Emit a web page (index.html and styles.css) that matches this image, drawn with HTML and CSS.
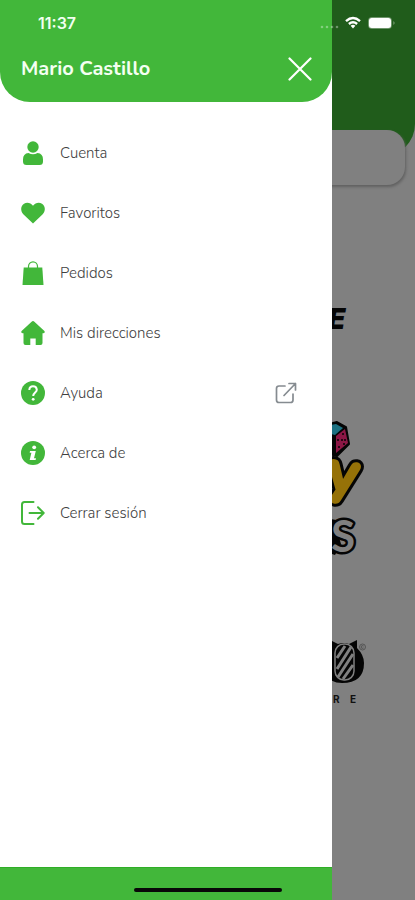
FILE: index.html
```html
<!DOCTYPE html>
<html lang="es">
<head>
<meta charset="utf-8">
<meta name="viewport" content="width=device-width, initial-scale=1">
<title>Menú</title>
<link rel="stylesheet" href="styles.css">
</head>
<body>
<div class="screen">
  <div class="status">
    <time class="clock">11:37</time>
    <svg class="status-icons" width="76" height="16" viewBox="0 0 76 16" aria-hidden="true">
      <g fill="#fff" opacity=".35"><circle cx="2" cy="12" r="1.3"/><circle cx="7" cy="12" r="1.3"/><circle cx="12" cy="12" r="1.3"/><circle cx="17" cy="12" r="1.3"/></g>
      <g fill="none" stroke="#fff" stroke-width="2.4"><path d="M26 6.2q7-6.2 14 0"/><path d="M28.9 9q4.100-3.600 8.200 0"/></g>
      <path d="M30.600 10.700q2.400-1.800 4.800 0L33 13.400z" fill="#fff"/>
      <rect x="48.500" y="2.500" width="23" height="11" rx="3" fill="none" stroke="#fff" opacity=".35"/>
      <rect x="49" y="3" width="22" height="10" rx="2.500" fill="#fff"/>
      <path d="M73.500 6q2 2 0 4z" fill="#fff" opacity=".5"/>
    </svg>
  </div>

  <main class="store">
    <div class="store-head"></div>
    <div class="search"></div>
    <div class="brands">
      <svg class="brand" width="83" height="40" viewBox="332 300 83 40">
        <text x="328" y="329" class="brand-e">E</text>
      </svg>
      <svg class="brand" width="83" height="150" viewBox="332 410 83 150">
        <path d="M326 423l11-3 9 5 3 17-12 12-11-3z" fill="#050505" stroke="#050505" stroke-width="2" stroke-linejoin="round"/>
        <path d="M326 424l10-2 7 4-8 7-9-2z" fill="#1d7182"/>
        <path d="M336 434l9-7 3 14-12 10z" fill="#8c1745"/>
        <g fill="#050505"><circle cx="343" cy="432" r="1"/><circle cx="338" cy="438" r="1"/><circle cx="342" cy="438" r="1"/><circle cx="345" cy="438" r="1"/><circle cx="339" cy="445" r="1"/><circle cx="344" cy="442" r="1"/></g>
        <text x="325" y="491" class="brand-y" transform="rotate(8 345 480)">y</text>
        <path d="M326 516l10 2 2 14 3 10-6 11-9-3z" fill="#050505"/>
        <text x="331" y="550" class="brand-s">S</text>
      </svg>
      <svg class="brand" width="83" height="75" viewBox="332 635 83 75">
        <path d="M327 646l5-4 6 3q6-2 11 0l8-4v8q7 7 7 15 0 20-22 20-17 0-17-18z" fill="#050505"/>
        <rect x="335" y="645" width="19" height="36" rx="9" fill="#050505" stroke="#808080" stroke-width="1.500"/>
        <g stroke="#808080" stroke-width="3"><path d="M337 659l8-12M337 670l14-22M338 678l15-23M343 680l10-14"/></g>
        <circle cx="362.500" cy="648" r="3" fill="none" stroke="#444" stroke-width=".7"/>
        <path d="M363.700 647q-2.500-1.300-2.500 1t2.500 1" fill="none" stroke="#444" stroke-width=".7"/>
        <text x="333" y="704" class="brand-small">R</text><text x="350" y="704" class="brand-small">E</text>
      </svg>
    </div>
  </main>

  <aside class="drawer">
    <header class="drawer-head">
      <h1>Mario Castillo</h1>
      <button class="close" type="button" aria-label="Cerrar">
        <svg width="24" height="24" viewBox="0 0 24 24" fill="none" stroke="#fff" stroke-width="2.200" stroke-linecap="round"><path d="M1.500 1.500l21 21M22.500 1.500l-21 21"/></svg>
      </button>
    </header>
    <nav class="menu">
      <a href="#cuenta"><svg class="icon" viewBox="0 0 24 24"><circle cx="12" cy="6" r="5.700"/><path d="M2 18.500Q2 12.500 7.500 12q4.500 2.500 9 0 5.500.5 5.500 6.500v2q0 3.500-3.500 3.500h-13Q2 24 2 20.500z"/></svg><span>Cuenta</span></a>
      <a href="#favoritos"><svg class="icon" viewBox="0 0 24 24"><path d="M12 22.500L2.300 13.200C-1 9.500-.2 4.800 3 2.700c3-2 6.700-1 9 2 2.300-3 6-4 9-2 3.200 2.100 4 6.800.7 10.500z"/></svg><span>Favoritos</span></a>
      <a href="#pedidos"><svg class="icon" viewBox="0 0 24 24"><path d="M2.700 6.500h18.600L22.500 24h-21z"/><path d="M7.500 8V5.500a4.500 4.700 0 0 1 9 0V8" fill="none" stroke="#42b73a" stroke-width="1.200"/></svg><span>Pedidos</span></a>
      <a href="#direcciones"><svg class="icon" viewBox="0 0 24 24"><path d="M10.600.7q1.400-1.200 2.800 0l10 9.200q1.200 2-1 2.300h-.9V22q0 2-2 2h-4.800v-6.500h-5.400V24H4.500q-2 0-2-2v-9.800h-.9q-2.200-.3-1-2.300z"/></svg><span>Mis direcciones</span></a>
      <a href="#ayuda"><svg class="icon" viewBox="0 0 24 24"><circle cx="12" cy="12" r="12"/><path d="M8.300 9Q8.500 5.300 12 5.300T15.800 8.700c0 2.700-3.600 3-3.600 6.300" fill="none" stroke="#fff" stroke-width="2"/><circle cx="12.200" cy="18.300" r="1.400" fill="#fff"/></svg><span>Ayuda</span>
        <svg class="external" width="22" height="22" viewBox="0 0 22 22" fill="none" stroke="#858b90" stroke-width="1.700" stroke-linecap="round" stroke-linejoin="round"><path d="M10 4H4Q1.500 4 1.500 6.500v11.500Q1.500 20.500 4 20.500h11.500Q18 20.500 18 18v-6M9 13.500L20.500 1.500M14 1.500h6.500V8"/></svg></a>
      <a href="#acerca"><svg class="icon" viewBox="0 0 24 24"><circle cx="12" cy="12" r="12"/><circle cx="13.200" cy="6.300" r="1.900" fill="#fff"/><path d="M9 10h5.800L13 17.300h2l-.4 1.700H8.700l1.700-7.300H8.700z" fill="#fff"/></svg><span>Acerca de</span></a>
      <a href="#salir"><svg class="icon" viewBox="0 0 24 24"><path d="M12.500 1H3.500Q1 1 1 3.500v17Q1 23 3.500 23h9M8.500 12h14M17 6.300L22.700 12 17 17.700" fill="none" stroke="#42b73a" stroke-width="2" stroke-linecap="round" stroke-linejoin="round"/></svg><span>Cerrar sesión</span></a>
    </nav>
    <div class="drawer-foot"></div>
  </aside>
  <div class="home-bar"></div>
</div>
</body>
</html>
```

FILE: styles.css
```css
* { box-sizing: border-box; }

body {
  margin: 0;
  background: #808080;
  font-family: Nunito, "Open Sans", sans-serif;
}

.screen {
  position: relative;
  display: grid;
  min-height: 100vh;
  overflow: hidden;
}

.store,
.drawer {
  grid-area: 1 / 1;
}

/* Status bar, over both layers */
.status {
  position: absolute;
  top: 0;
  left: 0;
  right: 0;
  z-index: 3;
  display: flex;
  align-items: center;
  justify-content: space-between;
  height: 46px;
  padding: 0 19px 0 38px;
}

.clock {
  color: #f2fff0;
  font: 600 16px/20px Inter, sans-serif;
}

/* Dimmed store page */
.store {
  display: flex;
  flex-direction: column;
  background: #808080;
}

.store-head {
  height: 156px;
  border-radius: 0 0 32px 32px;
  background: #205c1b;
}

.search {
  height: 55px;
  margin: -26px 10px 0;
  border-radius: 18px;
  background: #808080;
  box-shadow: 1px 2px 3px #606060;
}

.brands {
  display: flex;
  flex-direction: column;
  align-items: flex-end;
  gap: 72px;
  padding-top: 115px;
}

.brand-e {
  font: italic 900 28px Inter, sans-serif;
  fill: #050505;
}

.brand-y,
.brand-s {
  paint-order: stroke;
  stroke: #050505;
  stroke-linejoin: round;
}

.brand-y {
  font: 900 64px Nunito, "Open Sans", sans-serif;
  fill: #967208;
  stroke-width: 6px;
}

.brand-s {
  font: 700 44px Lato, sans-serif;
  fill: #808080;
  stroke-width: 5px;
}

.brand-small {
  font: 700 10px Inter, sans-serif;
  fill: #111;
}

/* Drawer */
.drawer {
  z-index: 2;
  display: flex;
  flex-direction: column;
  width: 80%;
  background: #fff;
}

.drawer-head {
  display: flex;
  align-items: flex-end;
  justify-content: space-between;
  height: 102px;
  padding: 0 20px 19px 21px;
  border-radius: 0 0 30px 30px;
  background: #42b73a;
}

.drawer-head h1 {
  margin: 0;
  color: #f4fff2;
  font-size: 20px;
  font-weight: 700;
  line-height: 28px;
}

.close {
  display: grid;
  place-items: center;
  height: 28px;
  padding: 0;
  border: 0;
  background: none;
}

.menu {
  display: flex;
  flex: 1;
  flex-direction: column;
  padding: 21px 35px 20px 21px;
}

.menu a {
  display: flex;
  align-items: center;
  gap: 15px;
  height: 60px;
  color: #404040;
  font-size: 15px;
  font-weight: 300;
  line-height: 20px;
  text-decoration: none;
}

.icon {
  width: 24px;
  height: 24px;
  fill: #42b73a;
}

.external {
  margin-left: auto;
}

.drawer-foot {
  height: 33px;
  border-top: 1px solid #2fae26;
  background: #42b73a;
}

.home-bar {
  position: absolute;
  bottom: 8px;
  left: 50%;
  z-index: 3;
  width: 148px;
  height: 4px;
  border-radius: 2px;
  background: #080808;
  transform: translateX(-50%);
}
```
